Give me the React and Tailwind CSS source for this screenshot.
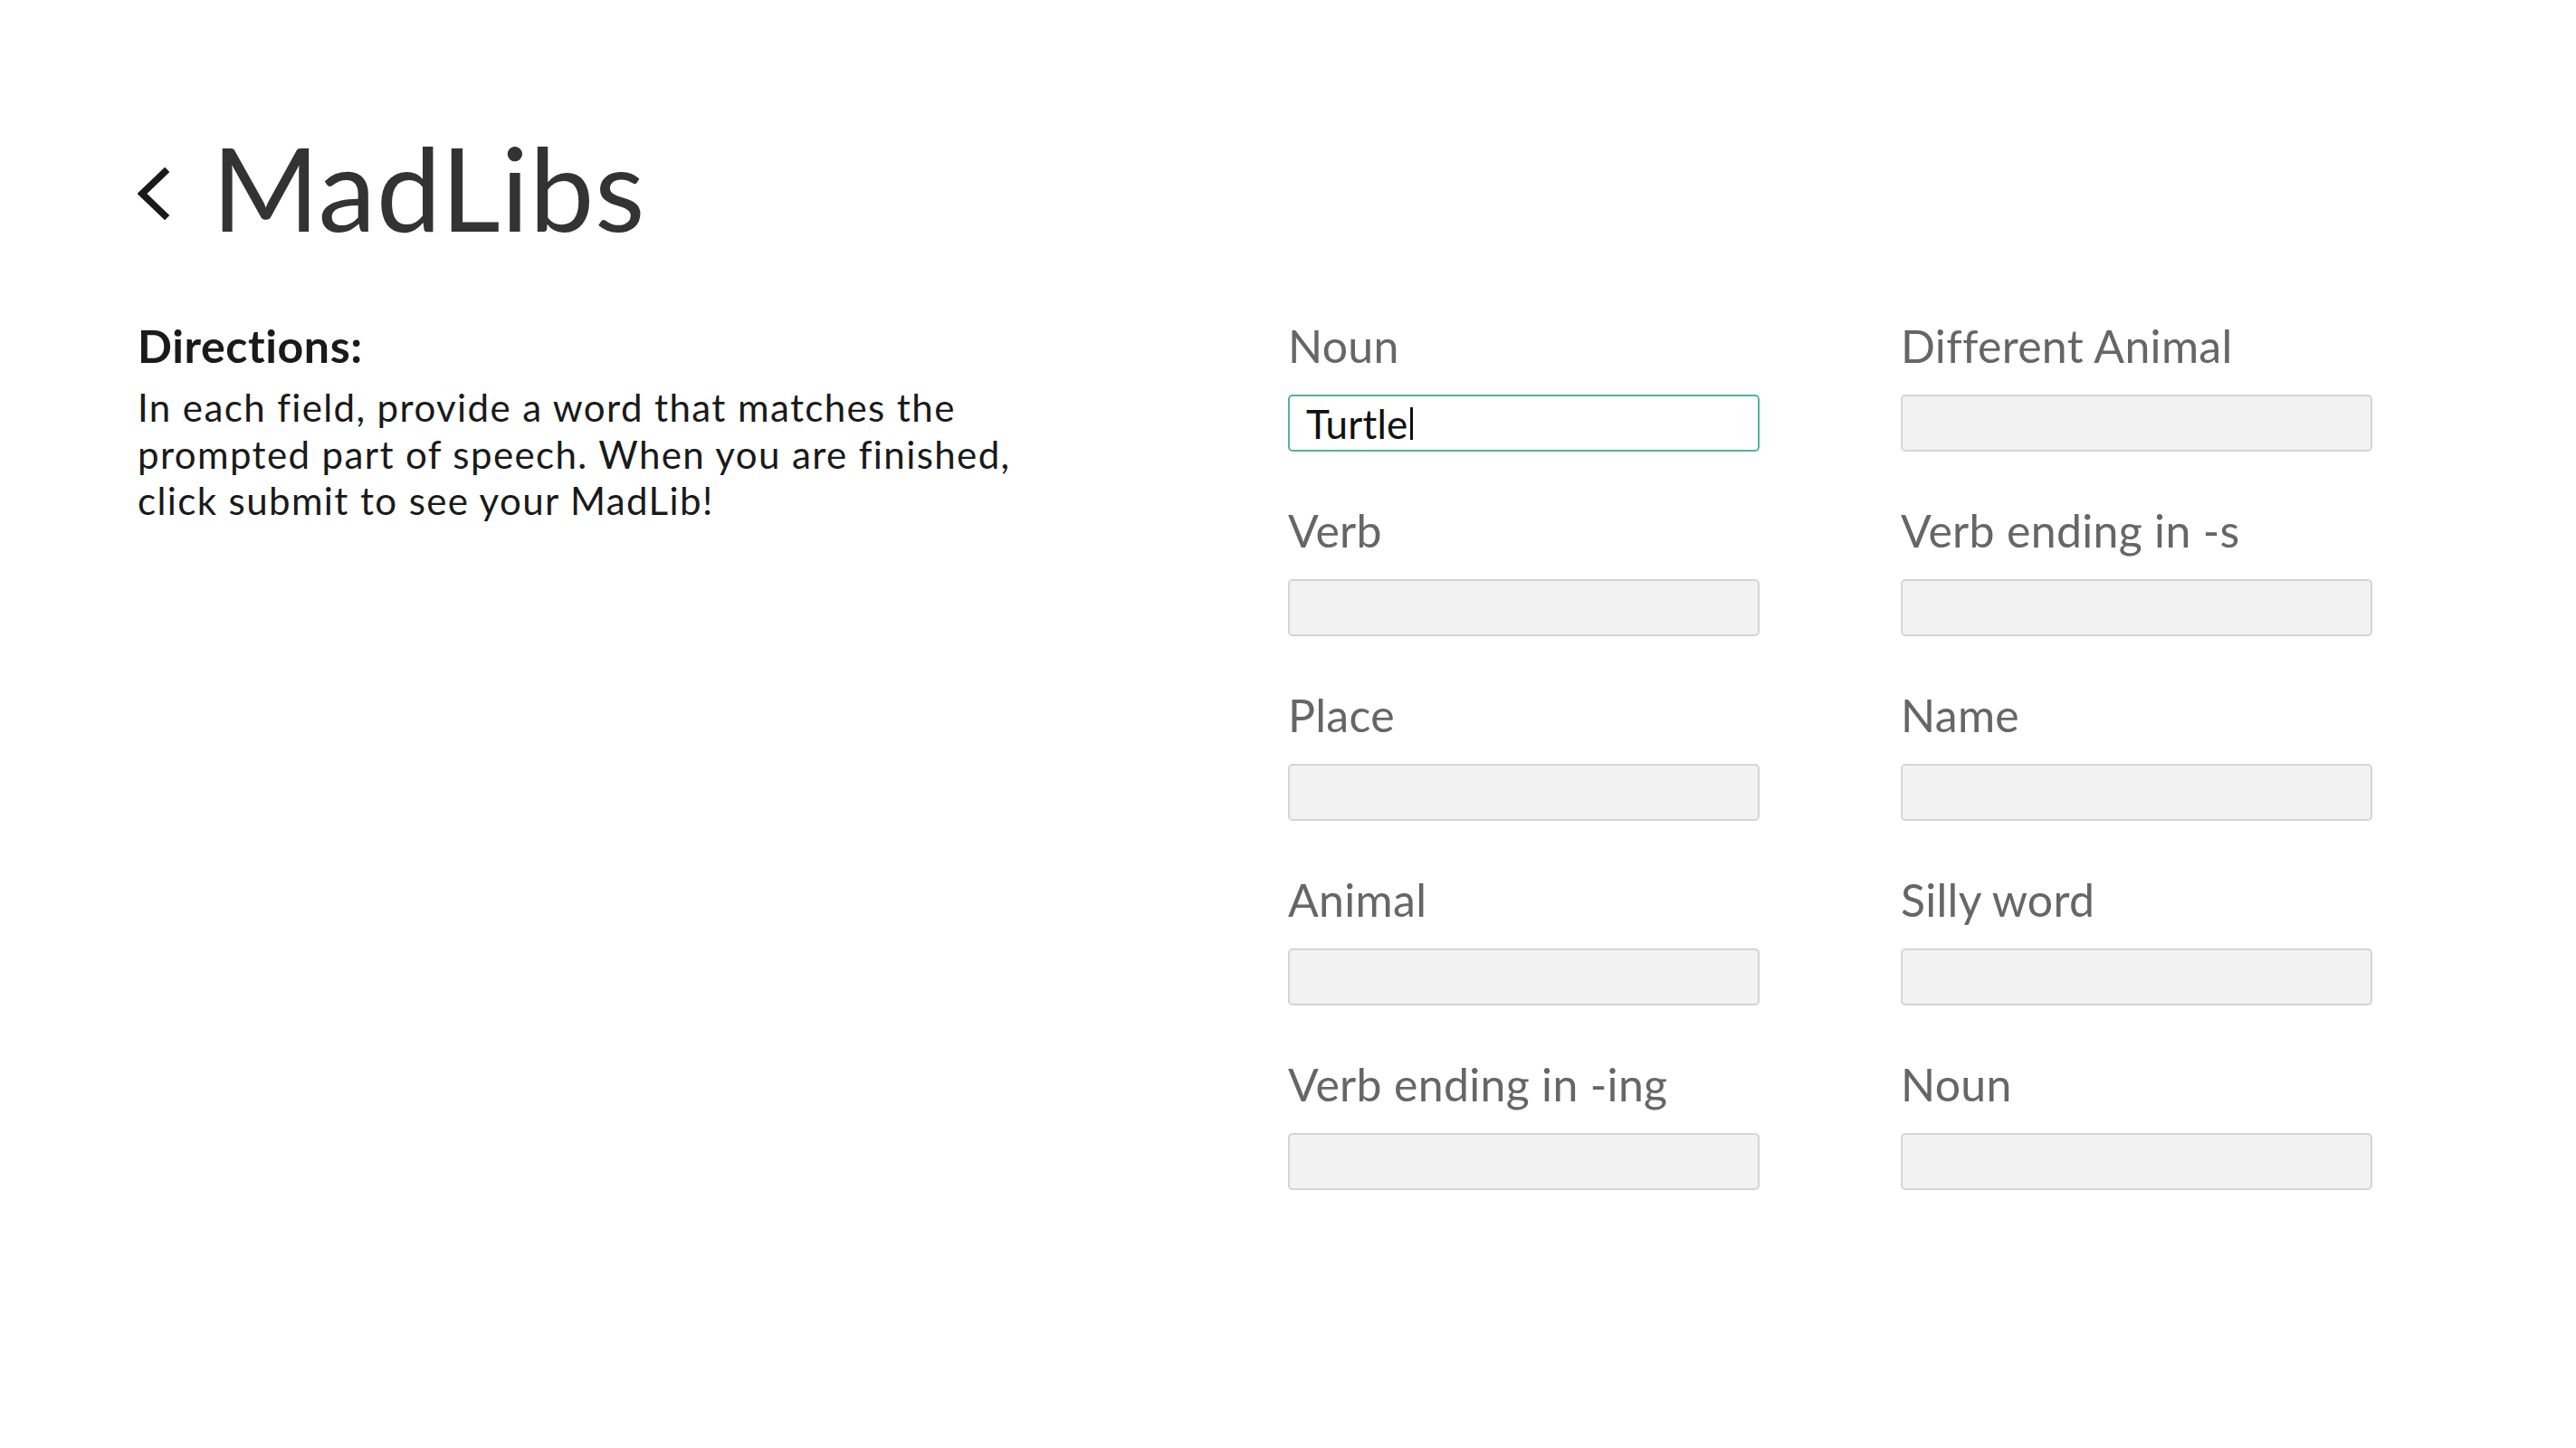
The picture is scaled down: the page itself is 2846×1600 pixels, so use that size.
const FIELDS = [
    ['Noun', 'Different Animal'],
    ['Verb', 'Verb ending in -s'],
    ['Place', 'Name'],
    ['Animal', 'Silly word'],
    ['Verb ending in -ing', 'Noun'],
];

const FONT = "font-['Lato','Open_Sans',sans-serif]";

const Field = ({ label, value, focused = false }) => (
    <div className="flex flex-col">
        <label className="text-[50px] leading-none tracking-[0.3px] text-[#666666]">{label}</label>
        {focused ? (
            <div className="mt-[29px] h-[63px] w-full rounded-[5px] border-2 border-[#52b593] bg-white pl-[18px] flex items-center">
                <span className="text-[44px] leading-none tracking-[0.2px] text-[#111111]">{value}</span>
                <span className="ml-[2px] h-[36px] w-[3px] bg-[#111111]" />
            </div>
        ) : (
            <input
                readOnly
                className="mt-[29px] h-[63px] w-full rounded-[5px] border-2 border-[#d5d5d5] bg-[#f2f2f2] outline-none"
            />
        )}
    </div>
);

export default function App() {
    return (
        <div className={`min-h-screen bg-white ${FONT} pl-[152px] pt-[143px]`}>
            <header className="flex items-center">
                <svg className="mt-[16px]" width="36" height="60" viewBox="0 0 36 60" fill="none">
                    <polyline points="30,5 5,29 30,53" stroke="#1a1a1a" strokeWidth="7.5" strokeLinecap="square" />
                </svg>
                <h1 className="ml-[46px] text-[128px] leading-none tracking-[0.6px] font-normal text-[#333333]">MadLibs</h1>
            </header>

            <main className="mt-[86px] flex">
                <section className="w-[1271px] shrink-0">
                    <h2 className="text-[50px] leading-none tracking-[0.6px] font-bold text-[#1a1a1a]">Directions:</h2>
                    <p className="mt-[18px] text-[42px] leading-[51.5px] tracking-[1.4px] text-[#1a1a1a]">
                        In each field, provide a word that matches the<br />
                        prompted part of speech. When you are finished,<br />
                        click submit to see your MadLib!
                    </p>
                </section>

                <section className="grid grid-cols-[521px_521px] gap-x-[156px] gap-y-[62px]">
                    {FIELDS.map(([left, right], i) => (
                        <div key={i} className="contents">
                            <Field label={left} value="Turtle" focused={i === 0} />
                            <Field label={right} />
                        </div>
                    ))}
                </section>
            </main>
        </div>
    );
}
